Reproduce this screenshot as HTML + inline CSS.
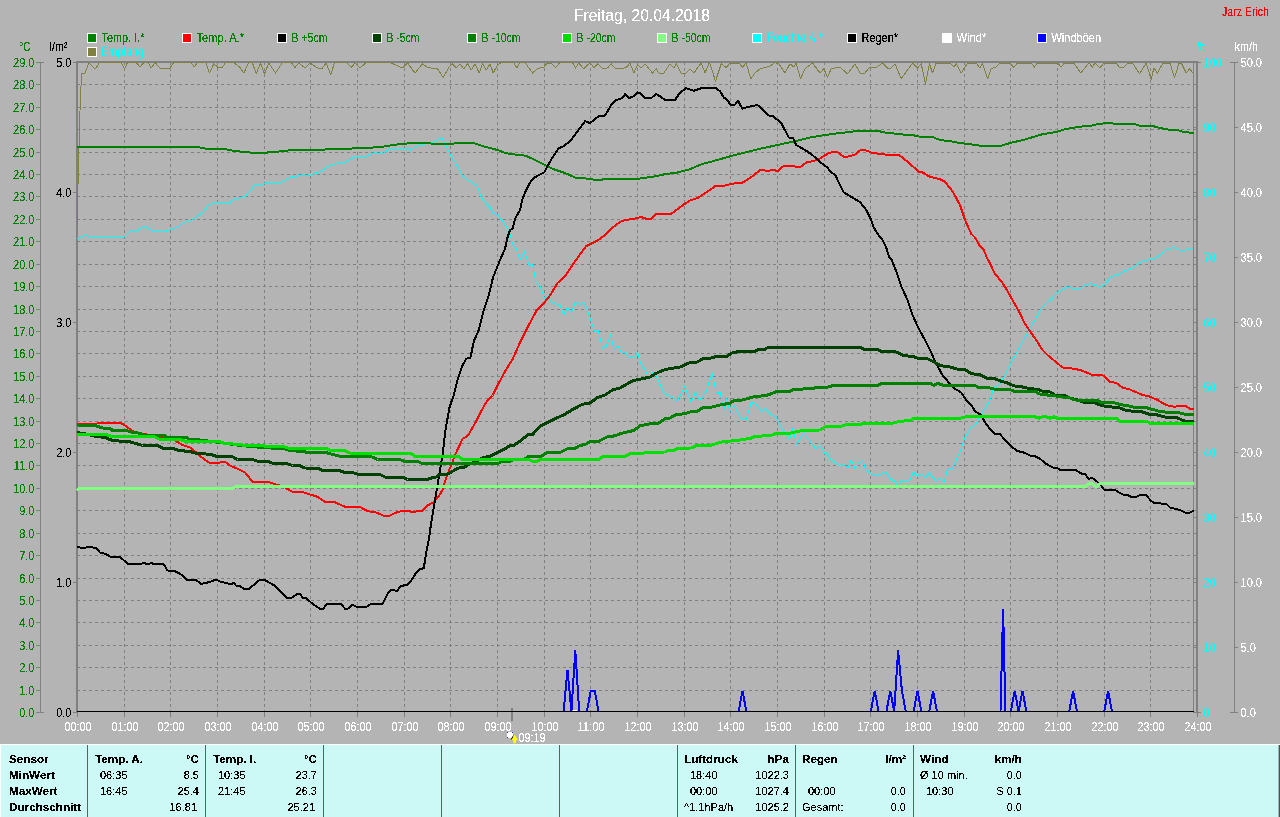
<!DOCTYPE html>
<html lang="de"><head><meta charset="utf-8"><title>Freitag, 20.04.2018</title>
<style>
html,body{margin:0;padding:0;background:#b4b4b4;overflow:hidden}
svg{display:block;position:absolute;left:0;top:0}
text{font-family:"Liberation Sans",Arial,sans-serif;font-size:12px}
text{filter:url(#na)}
.p text{font-size:11.5px}
.p text.b{font-weight:bold;font-size:11.7px}
.g{fill:#008000}.w{fill:#fff}.c{fill:#00ffff}.k{fill:#000}.r{fill:#ff0000}
.e{text-anchor:end}.m{text-anchor:middle}
.ax{stroke:#808080;stroke-width:1;fill:none;shape-rendering:crispEdges}
.gr{stroke:#808080;stroke-width:1;fill:none;stroke-dasharray:3 3;shape-rendering:crispEdges}
.cv{fill:none;stroke-linejoin:round;stroke-linecap:butt;shape-rendering:crispEdges}
</style></head><body>
<svg width="1280" height="817" viewBox="0 0 1280 817">
<rect x="0" y="0" width="1280" height="817" fill="#b4b4b4"/>
<defs><filter id="na" x="-5%%" y="-25%%" width="110%%" height="150%%" color-interpolation-filters="sRGB"><feComponentTransfer><feFuncA type="discrete" tableValues="0 0 0 0 1 1 1 1 1 1"/></feComponentTransfer></filter></defs>
<path class="gr" d="M77 690.5H1193M77 667.5H1193M77 645.5H1193M77 622.5H1193M77 600.5H1193M77 578.5H1193M77 555.5H1193M77 533.5H1193M77 510.5H1193M77 488.5H1193M77 465.5H1193M77 443.5H1193M77 421.5H1193M77 398.5H1193M77 376.5H1193M77 353.5H1193M77 331.5H1193M77 309.5H1193M77 286.5H1193M77 264.5H1193M77 241.5H1193M77 219.5H1193M77 196.5H1193M77 174.5H1193M77 152.5H1193M77 129.5H1193M77 107.5H1193M77 84.5H1193M124.5 62V711M170.5 62V711M217.5 62V711M264.5 62V711M310.5 62V711M357.5 62V711M404.5 62V711M450.5 62V711M497.5 62V711M544.5 62V711M590.5 62V711M637.5 62V711M684.5 62V711M730.5 62V711M777.5 62V711M824.5 62V711M870.5 62V711M917.5 62V711M964.5 62V711M1010.5 62V711M1057.5 62V711M1104.5 62V711M1150.5 62V711"/>
<g shape-rendering="crispEdges">
<rect x="76" y="61" width="2" height="652" fill="#808080"/>
<rect x="76" y="61" width="1122" height="2" fill="#808080"/>
<rect x="1196" y="61" width="2" height="652" fill="#808080"/>
<rect x="1193" y="63" width="1" height="650" fill="#808080"/>
<rect x="511" y="708" width="2" height="13" fill="#808080"/>
</g>
<path class="cv" stroke="#808040" stroke-width="1" d="M77.0 225.0L77.5 205.0L78.5 165.0L79.5 130.0L80.5 92.5L82.0 73.0L85.0 73.0L88.8 63.0L93.8 68.0L96.2 68.0L99.5 62.5L121.2 62.5L124.5 68.8L127.5 62.5L136.2 62.5L140.0 67.0L143.8 62.5L148.0 62.5L151.2 68.0L155.0 62.5L160.0 68.0L170.0 68.0L173.8 62.5L191.2 62.5L194.2 67.0L197.5 62.5L205.8 62.5L209.5 73.0L213.8 63.8L218.8 68.0L222.5 67.0L225.5 62.5L233.8 62.5L240.0 67.5L243.8 73.0L248.8 62.5L252.5 63.0L256.2 73.8L260.5 63.0L264.5 73.8L268.8 63.0L275.5 73.0L282.5 62.5L291.2 62.5L295.0 67.5L298.8 63.0L305.0 68.0L310.0 63.0L317.5 68.0L322.5 68.0L326.2 63.0L330.8 75.0L334.5 62.5L346.2 62.5L351.2 67.5L355.0 63.0L360.0 68.0L366.2 62.5L390.0 62.5L402.5 68.0L407.5 63.0L415.0 73.0L422.5 63.8L427.5 67.5L437.5 68.8L443.2 77.5L448.8 67.5L452.5 63.8L456.2 68.0L460.0 63.8L463.8 68.8L467.5 63.8L471.2 70.0L475.0 63.8L479.2 73.0L482.5 63.8L486.2 70.0L490.0 63.8L493.2 73.0L497.5 65.0L501.2 62.5L513.8 62.5L516.8 68.0L520.0 62.5L525.0 62.5L532.5 73.0L537.5 68.8L543.8 67.0L547.5 63.0L551.2 63.0L555.5 67.5L560.0 62.5L572.5 62.5L575.5 68.0L578.8 63.0L583.8 68.8L587.5 65.0L590.5 63.0L593.8 68.0L597.5 63.8L602.5 68.8L607.5 68.0L611.2 63.8L615.0 68.0L621.2 68.8L626.2 67.5L630.0 63.0L633.8 73.0L637.5 65.0L641.2 68.0L645.0 63.8L652.5 73.0L656.2 68.8L658.8 73.0L663.8 73.0L670.0 63.8L673.8 68.0L676.2 63.8L681.2 73.0L686.2 73.0L690.0 68.8L693.8 73.0L701.2 63.0L705.0 73.0L708.8 63.8L710.0 63.8L715.5 81.2L721.2 63.8L726.2 67.5L730.0 63.0L738.8 63.0L742.5 67.0L746.2 63.0L750.8 78.8L755.0 73.0L760.0 68.8L770.0 66.2L775.0 62.5L778.8 63.8L785.0 73.0L790.0 63.8L793.8 67.0L796.2 63.0L800.5 78.8L805.0 68.8L812.5 63.0L820.0 73.0L823.8 68.8L827.5 77.0L831.2 68.8L840.0 67.0L847.5 73.8L855.0 63.8L860.0 73.0L865.0 73.0L868.8 68.0L876.2 67.5L882.5 63.0L887.5 68.0L891.2 68.0L895.0 63.8L901.2 78.8L912.5 63.0L917.5 68.0L921.2 63.8L925.5 83.8L929.5 63.8L932.5 73.0L936.2 63.0L950.0 63.0L953.8 67.0L956.2 63.8L961.2 73.0L967.5 63.0L976.2 63.0L980.0 68.0L982.5 63.8L987.5 78.8L991.2 68.8L996.2 67.0L1000.0 63.0L1010.0 63.0L1013.8 67.5L1017.5 63.0L1028.8 63.0L1031.2 63.0L1034.5 67.0L1037.5 63.0L1057.5 63.0L1061.2 67.0L1063.8 63.8L1073.8 63.0L1080.8 73.0L1088.8 63.0L1092.5 67.0L1095.0 63.0L1100.0 68.0L1103.8 63.0L1116.2 63.0L1120.0 68.0L1123.8 67.0L1127.5 63.8L1132.5 63.0L1139.5 73.8L1146.2 63.0L1151.2 79.5L1153.8 68.0L1157.5 73.0L1162.5 63.8L1170.0 63.0L1174.5 78.0L1178.8 63.8L1181.2 63.0L1186.2 73.0L1189.5 68.8L1193.0 73.0"/>
<path class="cv" stroke="#00ffff" stroke-width="1" d="M77.0 238.8L85.5 235.5L90.0 237.5L123.8 237.5L131.2 230.0L135.5 232.0L144.2 226.2L153.8 231.2L166.2 231.2L171.2 228.8L177.5 227.5L186.2 221.2L191.2 220.5L202.5 212.5L209.5 204.5L218.8 202.5L228.8 203.5L233.8 199.2L245.0 196.8L255.0 185.0L263.8 184.2L268.8 182.5L271.2 184.0L282.5 182.0L290.0 177.5L300.0 175.5L306.2 176.0L320.0 172.0L328.8 166.2L337.5 163.5L345.0 162.5L352.5 158.0L360.0 156.2L365.0 157.0L373.8 153.2L383.8 153.2L390.0 148.0L396.2 150.0L407.5 148.0L411.2 150.5L417.5 145.5L422.5 144.5L433.8 142.0L437.5 139.5L442.5 138.2L445.5 145.5L451.2 156.2L457.5 166.2L462.5 176.2L470.0 181.2L477.5 186.2L481.2 197.5L486.2 203.8L490.0 207.5L492.5 212.5L497.5 215.0L502.5 221.2L507.5 228.8L508.8 230.0L512.5 243.8L516.2 248.8L520.0 260.0L524.5 252.0L528.8 264.5L532.5 264.5L536.2 282.5L540.0 286.2L544.5 298.0L548.0 295.5L552.0 303.0L560.0 305.0L563.8 315.0L567.5 307.5L571.2 312.5L575.5 301.8L579.5 304.5L583.8 303.0L587.5 310.0L594.5 332.0L598.2 330.0L602.5 348.8L606.2 346.2L610.5 335.0L614.2 350.0L618.0 346.2L621.2 351.8L625.0 352.5L630.0 358.0L635.0 356.2L637.5 352.5L640.8 363.8L645.0 370.0L649.5 379.5L653.2 371.2L657.5 378.8L663.8 393.0L672.5 397.5L676.8 402.0L684.5 386.8L691.2 402.0L695.5 392.5L700.0 400.0L706.2 391.2L710.0 379.5L712.5 373.8L716.2 393.8L720.0 392.5L723.8 410.0L726.2 398.8L730.0 411.2L734.2 405.0L741.2 419.5L746.2 419.5L751.2 402.5L756.2 404.5L761.2 411.2L765.5 408.8L770.0 413.8L776.2 417.0L782.5 430.0L783.8 431.2L789.5 439.5L793.2 427.5L796.2 444.5L803.8 432.5L808.8 440.0L816.2 448.8L821.2 446.2L824.5 453.0L827.5 454.5L831.2 460.0L840.0 465.5L843.8 464.5L847.5 468.8L851.2 460.0L855.0 468.8L859.2 462.5L863.0 461.2L866.2 471.2L870.0 472.5L875.0 476.2L886.2 472.5L890.0 478.8L895.0 481.2L898.0 487.5L901.2 480.5L906.2 482.0L910.0 479.5L913.8 472.0L917.5 476.2L922.0 474.5L925.5 477.0L929.5 473.0L932.5 477.0L936.2 480.5L940.0 479.5L944.5 481.2L947.5 468.8L952.5 468.8L957.5 457.0L961.2 448.8L965.0 437.5L971.2 427.0L976.2 423.8L981.2 413.8L985.0 408.8L990.0 400.0L993.8 388.0L1000.0 384.2L1005.0 375.0L1010.0 365.0L1017.5 351.2L1025.0 337.5L1030.0 328.8L1035.0 320.0L1041.2 308.8L1046.2 303.8L1051.2 299.5L1056.2 293.8L1062.5 288.8L1067.5 287.5L1080.0 288.8L1083.8 285.0L1091.2 283.8L1100.0 287.0L1105.0 283.8L1111.2 277.0L1117.5 275.0L1125.0 270.8L1131.2 268.8L1137.5 264.5L1143.8 260.5L1153.8 259.2L1160.0 255.0L1166.2 250.0L1173.8 247.5L1181.2 251.2L1186.2 250.0L1192.5 248.2"/>
<path class="cv" stroke="#008000" stroke-width="2" d="M77.0 147.0L198.0 147.0L206.2 148.8L225.0 149.2L235.0 151.0L250.0 152.5L267.5 152.5L282.5 151.2L295.0 149.5L325.0 149.5L345.0 148.8L370.0 147.8L387.5 146.2L390.0 145.5L402.5 143.8L415.0 143.0L440.0 143.8L450.0 143.8L460.0 143.0L473.8 143.0L485.0 146.8L497.5 150.0L506.2 153.2L515.0 154.5L526.2 155.8L540.0 162.5L552.5 168.8L565.0 173.0L576.2 178.0L583.8 178.2L592.5 179.5L602.5 179.5L610.0 178.8L637.5 178.8L652.5 176.8L665.0 174.2L677.5 172.5L690.0 169.2L702.5 163.8L710.0 162.0L735.0 155.0L760.0 148.8L777.5 145.0L795.0 141.2L810.0 137.5L825.0 135.0L840.0 133.0L850.0 132.0L858.8 130.5L876.2 130.5L885.0 132.5L902.5 134.5L912.5 135.0L920.0 136.8L932.5 137.0L940.0 140.0L950.0 141.2L960.0 143.0L970.0 144.2L981.2 145.8L1001.2 145.8L1010.0 143.0L1025.0 139.5L1042.5 134.2L1056.2 132.0L1063.8 129.5L1077.5 127.0L1092.5 125.5L1098.8 123.8L1110.0 123.0L1115.0 123.8L1133.8 123.8L1140.0 125.8L1152.5 126.0L1160.0 128.0L1167.5 129.5L1177.5 130.0L1183.8 132.0L1193.8 133.0"/>
<path class="cv" stroke="#ff0000" stroke-width="2" d="M77.0 423.8L82.5 424.2L95.0 423.8L102.5 422.5L120.0 422.5L126.2 426.2L132.5 431.2L140.0 433.8L152.5 435.0L162.5 437.5L175.0 440.5L182.5 445.0L190.0 447.5L196.2 452.5L202.5 458.0L208.8 462.5L220.0 462.5L225.0 461.8L230.0 465.5L237.5 468.8L245.0 472.5L252.5 481.8L267.5 481.8L275.0 484.2L282.5 486.2L292.5 491.8L302.5 492.0L317.5 496.8L325.0 501.8L333.8 501.8L345.0 506.8L360.0 507.0L367.5 511.2L375.0 512.0L383.8 515.8L390.0 515.5L397.5 512.0L406.2 510.5L412.5 512.0L422.5 510.5L427.5 505.5L433.8 502.0L438.8 496.2L442.5 490.0L446.2 477.5L451.2 465.0L456.2 452.5L462.5 438.8L466.2 437.0L469.5 433.0L476.2 421.2L483.8 406.2L488.8 398.8L492.5 395.5L498.8 383.0L505.5 370.5L512.5 359.5L520.0 342.5L527.5 327.5L536.2 311.2L541.2 306.2L550.0 295.5L557.5 283.0L565.0 276.2L575.0 261.2L586.2 246.2L597.5 240.5L605.0 235.0L610.0 230.0L612.5 227.5L620.0 222.0L625.0 220.0L633.8 218.8L641.2 217.0L647.5 219.2L651.2 218.8L656.2 213.8L671.2 213.8L683.8 204.5L690.0 200.5L697.5 198.0L710.0 190.0L715.0 186.2L725.0 185.5L735.0 183.2L742.0 183.0L752.5 176.2L760.0 170.0L767.5 170.8L773.8 170.0L777.5 171.2L783.8 165.8L792.5 165.8L796.2 166.8L800.5 166.8L806.2 162.5L817.5 160.0L827.5 153.8L832.5 151.8L837.5 152.0L843.8 157.0L850.0 156.2L855.0 154.5L860.0 150.5L865.0 150.0L872.5 153.0L885.0 154.5L898.8 155.0L902.5 157.5L910.0 163.8L918.8 171.8L922.5 172.5L930.0 176.8L940.0 179.2L945.0 181.8L952.5 191.2L960.0 205.0L965.0 220.0L971.2 233.8L975.0 237.5L980.0 246.2L983.8 250.0L987.0 258.0L988.8 261.2L995.0 273.8L1001.2 281.2L1006.2 288.8L1012.5 300.0L1018.8 311.2L1025.0 323.8L1030.0 331.2L1036.2 340.0L1042.5 350.0L1048.8 356.2L1055.0 361.2L1062.5 367.5L1075.0 368.8L1082.5 370.8L1091.2 374.5L1102.5 375.0L1110.0 381.8L1116.2 383.0L1122.5 387.5L1130.0 389.5L1142.5 395.0L1148.8 396.2L1157.5 400.0L1163.8 403.8L1170.0 406.2L1175.0 406.8L1180.0 405.5L1186.2 406.2L1190.0 408.8L1193.8 409.2"/>
<path class="cv" stroke="#000000" stroke-width="2" d="M77.0 547.0L82.5 548.0L90.0 547.0L96.2 548.0L100.0 552.5L105.0 553.8L111.2 557.0L120.0 557.0L128.0 563.8L141.2 563.8L143.8 563.0L147.5 564.2L151.2 563.2L155.0 564.2L163.8 564.2L167.5 570.5L175.0 571.2L181.2 574.5L186.2 579.5L195.0 579.5L201.2 583.8L210.0 582.0L216.2 579.5L221.2 582.0L227.5 583.2L230.0 584.5L233.8 583.0L236.2 585.8L240.0 586.2L243.8 588.8L248.8 588.8L253.8 585.0L258.8 580.5L263.8 579.5L270.0 583.0L275.0 585.8L280.0 591.2L286.2 597.5L291.2 598.0L297.5 593.8L300.0 593.8L302.5 597.5L306.2 598.2L312.5 603.8L320.0 608.8L323.0 608.8L327.0 603.8L341.2 603.8L345.0 608.8L347.5 608.8L352.5 605.0L357.5 607.0L366.2 607.0L371.2 603.8L382.5 603.8L387.5 593.8L391.2 590.0L397.0 590.8L401.2 585.8L407.5 585.0L412.5 578.8L416.2 572.5L420.0 569.2L423.8 568.2L426.2 552.5L428.8 540.0L431.2 522.5L435.0 500.0L438.8 477.5L442.5 455.0L445.5 430.0L449.5 407.5L453.8 395.0L457.5 380.0L462.0 366.2L466.2 358.8L470.5 357.5L473.8 341.2L478.8 330.0L483.8 310.0L488.8 295.0L493.0 277.5L500.0 260.0L505.0 248.8L507.5 237.5L510.0 230.0L512.5 228.8L515.0 218.8L520.0 210.0L522.5 198.8L526.2 190.0L530.0 182.5L533.8 178.0L538.8 175.0L544.2 172.5L547.5 166.2L552.5 157.5L558.8 148.0L562.5 147.0L570.0 141.2L577.5 131.2L585.0 121.2L590.0 123.0L598.8 116.2L605.0 115.5L611.2 105.0L616.2 100.0L622.5 98.0L625.0 94.2L628.8 98.0L632.5 97.0L637.5 92.5L641.2 93.8L645.0 98.0L651.2 98.0L656.2 94.2L660.0 96.2L665.0 100.0L675.0 100.0L680.0 92.5L686.2 88.2L693.8 90.8L701.2 88.2L710.0 88.2L715.0 87.5L720.0 91.2L723.8 97.5L727.5 100.0L730.5 105.0L735.0 104.5L738.0 100.8L742.5 108.8L747.5 107.0L757.5 105.0L763.8 110.5L768.8 115.5L772.5 115.8L781.2 123.0L788.8 137.5L793.2 138.0L796.2 145.0L805.0 150.0L812.5 155.0L820.0 162.0L827.5 167.5L831.2 172.5L835.0 174.5L840.0 185.0L843.8 192.5L851.2 196.8L860.0 202.0L866.2 210.0L871.2 220.0L873.8 227.5L878.0 234.5L882.5 240.0L886.2 247.5L889.5 258.0L891.2 258.8L896.2 271.2L901.2 286.2L907.5 300.0L912.5 315.0L918.8 328.8L925.0 340.0L931.2 352.5L936.2 363.8L942.5 375.0L948.8 382.5L955.0 388.8L961.2 392.5L966.2 400.0L971.2 405.0L975.0 411.2L981.2 415.0L985.0 422.5L990.0 428.8L991.2 430.0L995.0 433.8L1000.0 434.2L1005.0 440.0L1011.2 446.2L1017.5 451.2L1022.5 452.0L1030.0 455.5L1035.0 456.2L1040.0 458.8L1046.2 463.8L1052.5 467.5L1057.5 468.0L1060.0 470.0L1076.2 470.0L1080.0 473.2L1085.0 474.2L1088.8 478.8L1092.5 478.0L1097.5 482.0L1101.2 485.5L1103.8 489.5L1115.0 490.0L1122.5 494.5L1127.5 495.0L1131.2 496.8L1136.2 496.8L1141.2 494.5L1146.2 495.0L1151.2 501.2L1155.0 503.2L1166.2 503.8L1170.0 507.5L1175.0 508.8L1180.0 510.0L1185.0 512.5L1190.0 512.5L1193.8 510.5"/>
<path class="cv" stroke="#004000" stroke-width="3" d="M77.0 432.5L85.0 433.8L95.0 436.2L105.0 437.5L112.5 440.5L130.0 441.8L142.5 445.5L157.5 445.5L163.8 448.8L173.8 448.8L180.0 450.8L188.8 451.2L195.0 453.0L205.0 453.8L212.5 455.0L217.5 456.8L232.5 456.8L237.5 459.5L252.5 459.5L257.5 461.2L267.5 461.2L272.5 463.2L287.5 463.8L292.5 465.5L300.0 465.8L305.0 468.0L317.5 468.2L322.5 470.5L340.0 470.8L345.0 472.5L352.5 472.5L357.5 474.2L380.0 474.5L385.0 477.0L390.0 477.0L403.8 477.5L407.5 479.5L427.5 479.5L432.5 477.5L436.2 477.0L440.0 474.5L447.5 474.2L453.8 470.5L458.8 468.0L463.8 467.5L470.0 463.8L476.2 461.2L483.8 457.5L490.0 456.2L497.5 452.5L505.0 448.8L510.0 445.5L513.8 445.5L520.0 441.2L527.5 435.0L532.5 434.5L540.0 426.2L552.5 420.0L565.0 414.2L572.5 409.5L582.5 404.2L590.0 403.0L597.5 397.5L605.0 395.0L612.5 390.0L620.0 388.0L632.5 380.8L640.0 379.2L650.0 377.0L655.0 373.8L665.0 369.5L680.0 367.0L690.0 362.5L697.5 362.0L702.5 358.8L710.0 358.2L717.5 356.2L727.5 356.2L731.2 353.2L737.5 351.8L755.0 351.2L758.8 349.5L765.0 349.2L768.8 347.0L860.0 347.0L863.8 349.2L877.5 349.5L882.5 351.8L896.2 352.0L903.8 355.8L912.5 356.2L917.5 358.2L927.5 358.8L933.8 361.8L940.0 365.5L950.0 367.0L957.5 369.2L965.0 369.5L971.2 373.8L980.0 374.5L986.2 378.0L995.0 378.8L1001.2 381.2L1007.5 383.0L1013.8 385.8L1022.5 387.0L1030.0 388.8L1037.5 389.2L1042.5 391.2L1050.0 392.0L1055.0 395.0L1065.0 395.8L1070.0 398.0L1077.5 400.0L1085.0 402.5L1095.0 403.0L1102.5 405.8L1110.0 406.8L1120.0 408.0L1125.0 410.0L1132.5 411.2L1142.5 412.0L1150.0 414.5L1157.5 415.0L1165.0 417.0L1177.5 418.0L1185.0 421.2L1193.8 421.2"/>
<path class="cv" stroke="#008000" stroke-width="3" d="M77.0 425.0L95.0 425.5L102.5 428.0L110.0 428.2L112.5 430.5L127.5 430.8L132.5 432.5L140.0 433.2L142.5 435.0L163.8 435.0L166.2 437.0L186.2 437.5L190.0 439.5L200.0 440.0L220.0 442.5L240.0 445.5L262.5 447.5L285.0 448.8L290.0 450.8L302.5 451.2L307.5 452.5L327.5 453.0L335.0 455.0L342.5 456.8L372.5 457.0L377.5 459.5L390.0 459.5L400.0 459.5L403.8 461.2L417.5 461.2L422.5 463.8L497.5 463.8L501.2 461.8L510.0 461.2L513.8 459.5L523.8 459.5L527.5 457.0L540.0 456.8L547.5 452.5L560.0 452.5L567.5 448.8L575.0 448.2L580.0 445.5L585.0 444.5L590.0 441.8L598.8 441.2L607.5 436.8L615.0 435.8L620.0 433.8L625.0 432.5L633.8 430.5L640.0 425.8L650.0 423.8L658.8 423.0L665.0 418.8L670.0 418.0L676.2 414.5L685.0 413.8L690.0 412.0L697.5 411.2L702.5 408.0L710.0 407.5L720.0 405.0L730.0 403.2L733.8 400.8L742.5 400.0L753.8 396.8L766.2 395.5L776.2 391.8L790.0 391.2L793.8 389.2L812.5 388.8L816.2 387.5L828.8 387.0L832.5 385.5L877.5 385.5L882.5 383.2L930.0 383.2L933.8 385.5L937.5 383.2L943.8 385.5L960.0 385.5L975.0 385.5L978.8 387.5L990.0 388.0L995.0 389.2L1010.0 389.5L1013.8 391.2L1035.0 391.2L1038.8 393.8L1047.5 395.0L1057.5 396.2L1070.0 398.0L1075.0 400.0L1097.5 400.5L1101.2 402.5L1115.0 403.0L1120.0 404.5L1130.0 406.2L1135.0 407.5L1147.5 408.0L1155.0 410.0L1160.0 411.8L1177.5 412.5L1185.0 414.2L1193.8 414.5"/>
<path class="cv" stroke="#00e000" stroke-width="3" d="M77.0 434.2L107.5 435.0L112.5 436.8L155.0 437.0L160.0 439.5L180.0 439.5L185.0 441.2L220.0 441.8L226.2 443.8L240.0 444.2L245.0 445.8L282.5 446.2L288.8 448.2L327.5 448.8L330.0 450.5L345.0 450.8L350.0 453.0L390.0 453.0L411.2 453.8L415.0 456.2L458.8 456.2L462.5 459.5L528.8 459.5L532.5 461.2L537.5 461.2L540.0 459.5L598.8 459.5L602.5 456.8L625.0 456.2L630.0 453.8L642.5 453.8L645.0 452.5L665.0 452.0L667.5 450.8L673.8 450.5L677.5 448.2L691.2 448.0L696.2 445.5L710.0 445.5L720.0 442.5L725.0 441.2L737.5 440.8L742.5 439.2L750.0 438.8L755.0 436.2L770.0 435.8L775.0 433.8L790.0 433.2L795.0 432.0L802.5 430.5L820.0 430.0L825.0 427.0L840.0 426.8L845.0 425.0L860.0 424.5L863.8 423.2L895.0 423.0L898.8 421.2L910.0 420.8L913.8 418.2L960.0 418.2L966.2 416.8L1035.0 416.8L1038.8 418.2L1042.5 416.8L1046.2 416.8L1050.0 418.2L1053.8 416.8L1056.2 418.0L1116.2 418.2L1120.0 421.2L1147.5 421.8L1151.2 423.8L1193.8 423.8"/>
<path class="cv" stroke="#80ff80" stroke-width="3" d="M77.0 490.5L80.0 488.2L232.5 488.2L236.2 486.5L390.0 486.8L960.0 486.8L1085.0 486.8L1088.8 483.8L1092.5 483.8L1096.2 486.8L1100.0 483.8L1193.8 483.8"/>
<path class="cv" stroke="#0000ff" stroke-width="2" style="stroke-linejoin:bevel" d="M563.6 711.5L567.5 669.9L571.4 711.5L575.3 650.4L579.2 711.5M586.9 711.5L590.8 690.7L594.7 690.7L598.6 711.5M738.6 711.5L742.5 690.7L746.4 711.5M870.8 711.5L874.7 690.7L878.6 711.5M886.4 711.5L890.3 690.7L894.2 711.5L898.1 650.4L901.9 690.7L905.8 711.5M913.6 711.5L917.5 690.7L921.4 711.5M929.2 711.5L933.1 690.7L936.9 711.5M1000.5 711.5L1003.1 608.8L1005.4 711.5M1010.8 711.5L1014.7 690.7L1018.6 711.5L1022.5 690.7L1026.4 711.5M1069.2 711.5L1073.1 690.7L1076.9 711.5M1104.2 711.5L1108.1 690.7L1111.9 711.5"/>
<rect x="77" y="711" width="1117" height="1" fill="#000" shape-rendering="crispEdges"/>
<rect x="573" y="710" width="4" height="1" fill="#fff" shape-rendering="crispEdges"/>
<path class="ax" d="M40.5 62V713M36 712.5H44M36 690.5H40M36 667.5H40M36 645.5H40M36 622.5H40M36 600.5H40M36 578.5H40M36 555.5H40M36 533.5H40M36 510.5H40M36 488.5H40M36 465.5H40M36 443.5H40M36 421.5H40M36 398.5H40M36 376.5H40M36 353.5H40M36 331.5H40M36 309.5H40M36 286.5H40M36 264.5H40M36 241.5H40M36 219.5H40M36 196.5H40M36 174.5H40M36 152.5H40M36 129.5H40M36 107.5H40M36 84.5H40M36 62.5H44M73 712.5H77M73 582.5H77M73 452.5H77M73 322.5H77M73 192.5H77M73 62.5H77M1194 712.5H1201M1194 647.5H1197M1194 582.5H1197M1194 517.5H1197M1194 452.5H1197M1194 387.5H1197M1194 322.5H1197M1194 257.5H1197M1194 192.5H1197M1194 127.5H1197M1194 62.5H1201M1194 690.5H1196M1194 667.5H1196M1194 645.5H1196M1194 622.5H1196M1194 600.5H1196M1194 578.5H1196M1194 555.5H1196M1194 533.5H1196M1194 510.5H1196M1194 488.5H1196M1194 465.5H1196M1194 443.5H1196M1194 421.5H1196M1194 398.5H1196M1194 376.5H1196M1194 353.5H1196M1194 331.5H1196M1194 309.5H1196M1194 286.5H1196M1194 264.5H1196M1194 241.5H1196M1194 219.5H1196M1194 196.5H1196M1194 174.5H1196M1194 152.5H1196M1194 129.5H1196M1194 107.5H1196M1194 84.5H1196M1234.5 62V713M1230 712.5H1238M1234 647.5H1238M1234 582.5H1238M1234 517.5H1238M1234 452.5H1238M1234 387.5H1238M1234 322.5H1238M1234 257.5H1238M1234 192.5H1238M1234 127.5H1238M1230 62.5H1238M77.5 712V717M124.5 712V717M170.5 712V717M217.5 712V717M264.5 712V717M310.5 712V717M357.5 712V717M404.5 712V717M450.5 712V717M497.5 712V717M544.5 712V717M590.5 712V717M637.5 712V717M684.5 712V717M730.5 712V717M777.5 712V717M824.5 712V717M870.5 712V717M917.5 712V717M964.5 712V717M1010.5 712V717M1057.5 712V717M1104.5 712V717M1150.5 712V717M1197.5 712V717"/>
<g class="g e">
<text x="34.5" y="716.8" textLength="15.3" lengthAdjust="spacingAndGlyphs">0.0</text>
<text x="34.5" y="694.8" textLength="15.3" lengthAdjust="spacingAndGlyphs">1.0</text>
<text x="34.5" y="671.8" textLength="15.3" lengthAdjust="spacingAndGlyphs">2.0</text>
<text x="34.5" y="649.8" textLength="15.3" lengthAdjust="spacingAndGlyphs">3.0</text>
<text x="34.5" y="626.8" textLength="15.3" lengthAdjust="spacingAndGlyphs">4.0</text>
<text x="34.5" y="604.8" textLength="15.3" lengthAdjust="spacingAndGlyphs">5.0</text>
<text x="34.5" y="582.8" textLength="15.3" lengthAdjust="spacingAndGlyphs">6.0</text>
<text x="34.5" y="559.8" textLength="15.3" lengthAdjust="spacingAndGlyphs">7.0</text>
<text x="34.5" y="537.8" textLength="15.3" lengthAdjust="spacingAndGlyphs">8.0</text>
<text x="34.5" y="514.8" textLength="15.3" lengthAdjust="spacingAndGlyphs">9.0</text>
<text x="34.5" y="492.8" textLength="21.5" lengthAdjust="spacingAndGlyphs">10.0</text>
<text x="34.5" y="469.8" textLength="20.7" lengthAdjust="spacingAndGlyphs">11.0</text>
<text x="34.5" y="447.8" textLength="21.5" lengthAdjust="spacingAndGlyphs">12.0</text>
<text x="34.5" y="425.8" textLength="21.5" lengthAdjust="spacingAndGlyphs">13.0</text>
<text x="34.5" y="402.8" textLength="21.5" lengthAdjust="spacingAndGlyphs">14.0</text>
<text x="34.5" y="380.8" textLength="21.5" lengthAdjust="spacingAndGlyphs">15.0</text>
<text x="34.5" y="357.8" textLength="21.5" lengthAdjust="spacingAndGlyphs">16.0</text>
<text x="34.5" y="335.8" textLength="21.5" lengthAdjust="spacingAndGlyphs">17.0</text>
<text x="34.5" y="313.8" textLength="21.5" lengthAdjust="spacingAndGlyphs">18.0</text>
<text x="34.5" y="290.8" textLength="21.5" lengthAdjust="spacingAndGlyphs">19.0</text>
<text x="34.5" y="268.8" textLength="21.5" lengthAdjust="spacingAndGlyphs">20.0</text>
<text x="34.5" y="245.8" textLength="21.5" lengthAdjust="spacingAndGlyphs">21.0</text>
<text x="34.5" y="223.8" textLength="21.5" lengthAdjust="spacingAndGlyphs">22.0</text>
<text x="34.5" y="200.8" textLength="21.5" lengthAdjust="spacingAndGlyphs">23.0</text>
<text x="34.5" y="178.8" textLength="21.5" lengthAdjust="spacingAndGlyphs">24.0</text>
<text x="34.5" y="156.8" textLength="21.5" lengthAdjust="spacingAndGlyphs">25.0</text>
<text x="34.5" y="133.8" textLength="21.5" lengthAdjust="spacingAndGlyphs">26.0</text>
<text x="34.5" y="111.8" textLength="21.5" lengthAdjust="spacingAndGlyphs">27.0</text>
<text x="34.5" y="88.8" textLength="21.5" lengthAdjust="spacingAndGlyphs">28.0</text>
<text x="34.5" y="66.8" textLength="21.5" lengthAdjust="spacingAndGlyphs">29.0</text>
</g>
<text class="g m" x="25" y="51" textLength="11.8" lengthAdjust="spacingAndGlyphs">°C</text>
<text class="k m" x="58.5" y="51" textLength="17.6" lengthAdjust="spacingAndGlyphs">l/m²</text>
<g class="k e">
<text x="71.5" y="716.8" textLength="15.3" lengthAdjust="spacingAndGlyphs">0.0</text>
<text x="71.5" y="586.8" textLength="15.3" lengthAdjust="spacingAndGlyphs">1.0</text>
<text x="71.5" y="456.8" textLength="15.3" lengthAdjust="spacingAndGlyphs">2.0</text>
<text x="71.5" y="326.8" textLength="15.3" lengthAdjust="spacingAndGlyphs">3.0</text>
<text x="71.5" y="196.8" textLength="15.3" lengthAdjust="spacingAndGlyphs">4.0</text>
<text x="71.5" y="66.8" textLength="15.3" lengthAdjust="spacingAndGlyphs">5.0</text>
</g>
<g class="c">
<text x="1203.5" y="716.8" textLength="6.1" lengthAdjust="spacingAndGlyphs">0</text>
<text x="1203.5" y="651.8" textLength="12.3" lengthAdjust="spacingAndGlyphs">10</text>
<text x="1203.5" y="586.8" textLength="12.3" lengthAdjust="spacingAndGlyphs">20</text>
<text x="1203.5" y="521.8" textLength="12.3" lengthAdjust="spacingAndGlyphs">30</text>
<text x="1203.5" y="456.8" textLength="12.3" lengthAdjust="spacingAndGlyphs">40</text>
<text x="1203.5" y="391.8" textLength="12.3" lengthAdjust="spacingAndGlyphs">50</text>
<text x="1203.5" y="326.8" textLength="12.3" lengthAdjust="spacingAndGlyphs">60</text>
<text x="1203.5" y="261.8" textLength="12.3" lengthAdjust="spacingAndGlyphs">70</text>
<text x="1203.5" y="196.8" textLength="12.3" lengthAdjust="spacingAndGlyphs">80</text>
<text x="1203.5" y="131.8" textLength="12.3" lengthAdjust="spacingAndGlyphs">90</text>
<text x="1203.5" y="66.8" textLength="18.4" lengthAdjust="spacingAndGlyphs">100</text>
</g>
<text class="c" x="1197.5" y="51" textLength="8.5" lengthAdjust="spacingAndGlyphs">%</text>
<text class="w" x="1234.5" y="51" textLength="23.4" lengthAdjust="spacingAndGlyphs">km/h</text>
<g class="w">
<text x="1240.5" y="716.8" textLength="15.3" lengthAdjust="spacingAndGlyphs">0.0</text>
<text x="1240.5" y="651.8" textLength="15.3" lengthAdjust="spacingAndGlyphs">5.0</text>
<text x="1240.5" y="586.8" textLength="21.5" lengthAdjust="spacingAndGlyphs">10.0</text>
<text x="1240.5" y="521.8" textLength="21.5" lengthAdjust="spacingAndGlyphs">15.0</text>
<text x="1240.5" y="456.8" textLength="21.5" lengthAdjust="spacingAndGlyphs">20.0</text>
<text x="1240.5" y="391.8" textLength="21.5" lengthAdjust="spacingAndGlyphs">25.0</text>
<text x="1240.5" y="326.8" textLength="21.5" lengthAdjust="spacingAndGlyphs">30.0</text>
<text x="1240.5" y="261.8" textLength="21.5" lengthAdjust="spacingAndGlyphs">35.0</text>
<text x="1240.5" y="196.8" textLength="21.5" lengthAdjust="spacingAndGlyphs">40.0</text>
<text x="1240.5" y="131.8" textLength="21.5" lengthAdjust="spacingAndGlyphs">45.0</text>
<text x="1240.5" y="66.8" textLength="21.5" lengthAdjust="spacingAndGlyphs">50.0</text>
</g>
<g class="w m">
<text x="78" y="731" textLength="27" lengthAdjust="spacingAndGlyphs">00:00</text>
<text x="125" y="731" textLength="27" lengthAdjust="spacingAndGlyphs">01:00</text>
<text x="171" y="731" textLength="27" lengthAdjust="spacingAndGlyphs">02:00</text>
<text x="218" y="731" textLength="27" lengthAdjust="spacingAndGlyphs">03:00</text>
<text x="265" y="731" textLength="27" lengthAdjust="spacingAndGlyphs">04:00</text>
<text x="311" y="731" textLength="27" lengthAdjust="spacingAndGlyphs">05:00</text>
<text x="358" y="731" textLength="27" lengthAdjust="spacingAndGlyphs">06:00</text>
<text x="405" y="731" textLength="27" lengthAdjust="spacingAndGlyphs">07:00</text>
<text x="451" y="731" textLength="27" lengthAdjust="spacingAndGlyphs">08:00</text>
<text x="498" y="731" textLength="27" lengthAdjust="spacingAndGlyphs">09:00</text>
<text x="545" y="731" textLength="27" lengthAdjust="spacingAndGlyphs">10:00</text>
<text x="591" y="731" textLength="27" lengthAdjust="spacingAndGlyphs">11:00</text>
<text x="638" y="731" textLength="27" lengthAdjust="spacingAndGlyphs">12:00</text>
<text x="685" y="731" textLength="27" lengthAdjust="spacingAndGlyphs">13:00</text>
<text x="731" y="731" textLength="27" lengthAdjust="spacingAndGlyphs">14:00</text>
<text x="778" y="731" textLength="27" lengthAdjust="spacingAndGlyphs">15:00</text>
<text x="825" y="731" textLength="27" lengthAdjust="spacingAndGlyphs">16:00</text>
<text x="871" y="731" textLength="27" lengthAdjust="spacingAndGlyphs">17:00</text>
<text x="918" y="731" textLength="27" lengthAdjust="spacingAndGlyphs">18:00</text>
<text x="965" y="731" textLength="27" lengthAdjust="spacingAndGlyphs">19:00</text>
<text x="1011" y="731" textLength="27" lengthAdjust="spacingAndGlyphs">20:00</text>
<text x="1058" y="731" textLength="27" lengthAdjust="spacingAndGlyphs">21:00</text>
<text x="1105" y="731" textLength="27" lengthAdjust="spacingAndGlyphs">22:00</text>
<text x="1151" y="731" textLength="27" lengthAdjust="spacingAndGlyphs">23:00</text>
<text x="1198" y="731" textLength="27" lengthAdjust="spacingAndGlyphs">24:00</text>
</g>
<text class="w" x="574" y="21" style="font-size:15.6px" textLength="136" lengthAdjust="spacingAndGlyphs">Freitag, 20.04.2018</text>
<text class="r" x="1222" y="16" textLength="46.9" lengthAdjust="spacingAndGlyphs">Jarz Erich</text>
<rect x="87.5" y="33.5" width="9" height="9" fill="#008000" stroke="#fff" shape-rendering="crispEdges"/>
<text class="g" x="101.5" y="42" textLength="43" lengthAdjust="spacingAndGlyphs">Temp. I.*</text>
<rect x="182.5" y="33.5" width="9" height="9" fill="#ff0000" stroke="#fff" shape-rendering="crispEdges"/>
<text class="g" x="196.5" y="42" textLength="47.5" lengthAdjust="spacingAndGlyphs">Temp. A.*</text>
<rect x="277.5" y="33.5" width="9" height="9" fill="#000000" stroke="#fff" shape-rendering="crispEdges"/>
<text class="g" x="291.5" y="42" textLength="36" lengthAdjust="spacingAndGlyphs">B +5cm</text>
<rect x="372.5" y="33.5" width="9" height="9" fill="#004000" stroke="#fff" shape-rendering="crispEdges"/>
<text class="g" x="386.5" y="42" textLength="33" lengthAdjust="spacingAndGlyphs">B -5cm</text>
<rect x="467.5" y="33.5" width="9" height="9" fill="#008000" stroke="#fff" shape-rendering="crispEdges"/>
<text class="g" x="481.5" y="42" textLength="39" lengthAdjust="spacingAndGlyphs">B -10cm</text>
<rect x="562.5" y="33.5" width="9" height="9" fill="#00dc00" stroke="#fff" shape-rendering="crispEdges"/>
<text class="g" x="576.5" y="42" textLength="39" lengthAdjust="spacingAndGlyphs">B -20cm</text>
<rect x="657.5" y="33.5" width="9" height="9" fill="#80ff80" stroke="#fff" shape-rendering="crispEdges"/>
<text class="g" x="671.5" y="42" textLength="39" lengthAdjust="spacingAndGlyphs">B -50cm</text>
<rect x="752.5" y="33.5" width="9" height="9" fill="#00ffff" stroke="#fff" shape-rendering="crispEdges"/>
<text class="c" x="766.5" y="42" textLength="56.5" lengthAdjust="spacingAndGlyphs">Feuchte A.*</text>
<rect x="847.5" y="33.5" width="9" height="9" fill="#000000" stroke="#fff" shape-rendering="crispEdges"/>
<text class="k" x="861.5" y="42" textLength="36.5" lengthAdjust="spacingAndGlyphs">Regen*</text>
<rect x="942.5" y="33.5" width="9" height="9" fill="#ffffff" stroke="#fff" shape-rendering="crispEdges"/>
<text class="w" x="956.5" y="42" textLength="30" lengthAdjust="spacingAndGlyphs">Wind*</text>
<rect x="1037.5" y="33.5" width="9" height="9" fill="#0000ff" stroke="#fff" shape-rendering="crispEdges"/>
<text class="w" x="1051.5" y="42" textLength="49.5" lengthAdjust="spacingAndGlyphs">Windböen</text>
<rect x="87.5" y="47.5" width="9" height="9" fill="#808040" stroke="#fff" shape-rendering="crispEdges"/>
<text class="c" x="101.5" y="56" textLength="42.3" lengthAdjust="spacingAndGlyphs">Empfang</text>
<text class="w" x="518.5" y="742" textLength="27" lengthAdjust="spacingAndGlyphs">09:19</text>
<g><rect x="507" y="732" width="6" height="6" fill="#2030a0" shape-rendering="crispEdges"/><rect x="508" y="732" width="4" height="6" fill="#fff" shape-rendering="crispEdges"/><rect x="507" y="733" width="6" height="4" fill="#fff" shape-rendering="crispEdges"/><path d="M513.6 734.4l-2.9 5.2h1.6z" fill="#000"/><path d="M514.6 734.6l-3.2 5.6h2v3h2.6v-3h2z" fill="#ffff00"/></g>
<g shape-rendering="crispEdges">
<rect x="0" y="744" width="1280" height="73" fill="#ccf9f6"/>
<rect x="0" y="744" width="1280" height="1" fill="#fff"/>
<rect x="0" y="744" width="1" height="73" fill="#fff"/>
<rect x="1279" y="745" width="1" height="72" fill="#505050"/><rect x="1278" y="745" width="1" height="72" fill="#a0b8b8"/>
<rect x="87" y="745" width="1" height="72" fill="#606060"/>
<rect x="205" y="745" width="1" height="72" fill="#606060"/>
<rect x="323" y="745" width="1" height="72" fill="#606060"/>
<rect x="441" y="745" width="1" height="72" fill="#606060"/>
<rect x="559" y="745" width="1" height="72" fill="#606060"/>
<rect x="677" y="745" width="1" height="72" fill="#606060"/>
<rect x="795" y="745" width="1" height="72" fill="#606060"/>
<rect x="913" y="745" width="1" height="72" fill="#606060"/>
</g>
<g class="k p">
<text x="9" y="763" class="b">Sensor</text>
<text x="9" y="779" class="b">MinWert</text>
<text x="9" y="795" class="b">MaxWert</text>
<text x="9" y="810.5" class="b">Durchschnitt</text>
<text x="95" y="763" class="b">Temp. A.</text>
<text x="199" y="763" class="b e">°C</text>
<text x="100" y="779" textLength="27.5" lengthAdjust="spacingAndGlyphs">06:35</text>
<text x="199" y="779" class="e" textLength="15.3" lengthAdjust="spacingAndGlyphs">8.5</text>
<text x="100" y="795" textLength="27.5" lengthAdjust="spacingAndGlyphs">16:45</text>
<text x="199" y="795" class="e" textLength="21.4" lengthAdjust="spacingAndGlyphs">25.4</text>
<text x="197" y="810.5" class="e" textLength="27.5" lengthAdjust="spacingAndGlyphs">16.81</text>
<text x="213" y="763" class="b">Temp. I.</text>
<text x="317" y="763" class="b e">°C</text>
<text x="218" y="779" textLength="27.5" lengthAdjust="spacingAndGlyphs">10:35</text>
<text x="317" y="779" class="e" textLength="21.4" lengthAdjust="spacingAndGlyphs">23.7</text>
<text x="218" y="795" textLength="27.5" lengthAdjust="spacingAndGlyphs">21:45</text>
<text x="317" y="795" class="e" textLength="21.4" lengthAdjust="spacingAndGlyphs">26.3</text>
<text x="315" y="810.5" class="e" textLength="27.5" lengthAdjust="spacingAndGlyphs">25.21</text>
<text x="684" y="763" class="b">Luftdruck</text>
<text x="789" y="763" class="b e">hPa</text>
<text x="690" y="779" textLength="27.5" lengthAdjust="spacingAndGlyphs">18:40</text>
<text x="789" y="779" class="e" textLength="33.7" lengthAdjust="spacingAndGlyphs">1022.3</text>
<text x="690" y="795" textLength="27.5" lengthAdjust="spacingAndGlyphs">00:00</text>
<text x="789" y="795" class="e" textLength="33.7" lengthAdjust="spacingAndGlyphs">1027.4</text>
<text x="684" y="810.5" textLength="49.2" lengthAdjust="spacingAndGlyphs">^1.1hPa/h</text>
<text x="789" y="810.5" class="e" textLength="33.7" lengthAdjust="spacingAndGlyphs">1025.2</text>
<text x="802" y="763" class="b">Regen</text>
<text x="906" y="763" class="b e">l/m²</text>
<text x="808" y="795" textLength="27.5" lengthAdjust="spacingAndGlyphs">00:00</text>
<text x="906" y="795" class="e" textLength="15.3" lengthAdjust="spacingAndGlyphs">0.0</text>
<text x="802" y="810.5" textLength="41.6" lengthAdjust="spacingAndGlyphs">Gesamt:</text>
<text x="906" y="810.5" class="e" textLength="15.3" lengthAdjust="spacingAndGlyphs">0.0</text>
<text x="920" y="763" class="b">Wind</text>
<text x="1022" y="763" class="b e">km/h</text>
<text x="920" y="779" textLength="47.7" lengthAdjust="spacingAndGlyphs">Ø 10 min.</text>
<text x="1022" y="779" class="e" textLength="15.3" lengthAdjust="spacingAndGlyphs">0.0</text>
<text x="926" y="795" textLength="27.5" lengthAdjust="spacingAndGlyphs">10:30</text>
<text x="1022" y="795" class="e" textLength="25.7" lengthAdjust="spacingAndGlyphs">S 0.1</text>
<text x="1022" y="810.5" class="e" textLength="15.3" lengthAdjust="spacingAndGlyphs">0.0</text>
</g>
</svg></body></html>
